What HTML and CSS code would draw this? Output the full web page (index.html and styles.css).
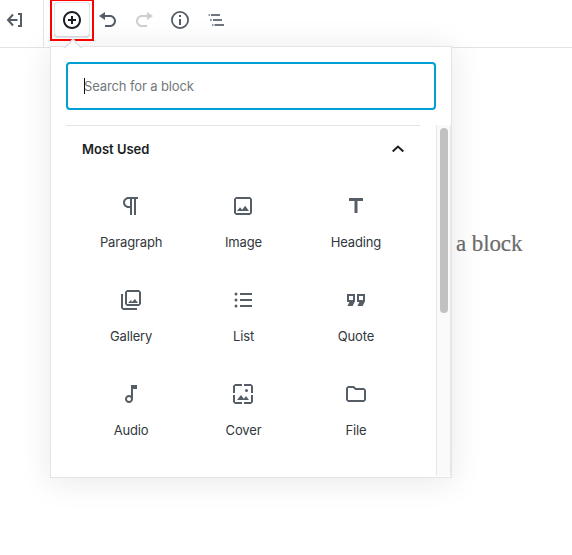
FILE: index.html
```html
<!DOCTYPE html>
<html lang="en">
<head>
<meta charset="utf-8">
<title>Block inserter</title>
<link rel="stylesheet" href="styles.css">
</head>
<body>
<header class="toolbar">
  <div class="toolbar-back">
    <svg class="back-icon" width="20" height="20" viewBox="0 0 20 20"><path d="M8 4.500 3 10l5 5.500M3 10h9.500M13 4h3v12h-3"/></svg>
  </div>
  <nav class="toolbar-tools">
    <button class="tool tool-active" aria-label="Add block"><svg width="20" height="20" viewBox="0 0 20 20"><path d="M10 1c-5 0-9 4-9 9s4 9 9 9 9-4 9-9-4-9-9-9zm0 16c-3.900 0-7-3.100-7-7s3.100-7 7-7 7 3.100 7 7-3.100 7-7 7zm1-11H9v3H6v2h3v3h2v-3h3V9h-3V6z"/></svg></button>
    <button class="tool" aria-label="Undo"><svg width="20" height="20" viewBox="0 0 20 20"><path d="M12 5H7V2L1 6l6 4V7h5c2.200 0 4 1.800 4 4s-1.800 4-4 4H7v2h5c3.300 0 6-2.700 6-6s-2.700-6-6-6z"/></svg></button>
    <button class="tool tool-disabled" aria-label="Redo"><svg width="20" height="20" viewBox="0 0 20 20"><path d="M8 5h5V2l6 4-6 4V7H8c-2.200 0-4 1.800-4 4s1.800 4 4 4h5v2H8c-3.300 0-6-2.700-6-6s2.700-6 6-6z"/></svg></button>
    <button class="tool" aria-label="Content structure"><svg width="20" height="20" viewBox="0 0 20 20"><path d="M10 1a9 9 0 1 0 0 18 9 9 0 0 0 0-18zm0 16.200a7.200 7.200 0 1 1 0-14.400 7.200 7.200 0 0 1 0 14.400zM9 5h2v2H9zM9 9h2v6H9z"/></svg></button>
    <button class="tool tool-outline" aria-label="Block navigation"><svg width="20" height="20" viewBox="0 0 20 20"><path d="M2.500 4.200h1.500v1.600h-1.500zM5 4h9v2H5zM4 9.200h1.800v1.600H4zM7 9h9v2H7zM6 14.200h1.500v1.600H6zM8.500 14H18v2H8.500z"/></svg></button>
  </nav>
</header>
<main class="canvas">
  <p class="canvas-hint">a block</p>
</main>
<section class="popover">
  <div class="search">Search for a block</div>
  <div class="results">
    <div class="panel">
      <h2 class="panel-title"><span>Most Used</span><svg width="20" height="20" viewBox="0 0 20 20"><path d="m4.700 12.500 5.300-5 5.300 5"/></svg></h2>
      <ul class="blocks">
        <li class="block"><svg width="24" height="24" viewBox="0 0 24 24"><path d="M11 5v7H9.500C7.600 12 6 10.400 6 8.500S7.600 5 9.500 5H11m8-2H9.500C6.500 3 4 5.500 4 8.500S6.500 14 9.500 14H11v7h2V5h2v16h2V5h2V3z"/></svg><span>Paragraph</span></li>
        <li class="block"><svg width="24" height="24" viewBox="0 0 24 24"><path d="M19 5v14H5V5h14m0-2H5L3 5v14l2 2h14l2-2V5l-2-2z"/><path d="m14.140 11.860-3 3.870L9 13.140 6 17h12z"/></svg><span>Image</span></li>
        <li class="block"><svg width="24" height="24" viewBox="0 0 24 24"><path d="M5 4v3h5.500v12h3V7H19V4z"/></svg><span>Heading</span></li>
        <li class="block"><svg width="24" height="24" viewBox="0 0 24 24"><path d="M20 4v12H8V4h12m0-2H8L6 4v12l2 2h12l2-2V4l-2-2z"/><path d="m12 12 1 2 3-3 3 4H9zM2 6v14l2 2h14v-2H4V6H2z"/></svg><span>Gallery</span></li>
        <li class="block"><svg width="24" height="24" viewBox="0 0 24 24"><path d="M9 5h12v2H9zM9 11h12v2H9zM9 17h12v2H9z"/><circle cx="5" cy="6" r="1.500"/><circle cx="5" cy="12" r="1.500"/><circle cx="5" cy="18" r="1.500"/></svg><span>List</span></li>
        <li class="block"><svg width="24" height="24" viewBox="0 0 24 24"><path fill-rule="evenodd" d="M13 6h8v7.240L18.620 18h-5.240l2-4H13zM15 8v4h4V8zM3 6h8v7.240L8.620 18H3.380l2-4H3zM5 8v4h4V8z"/></svg><span>Quote</span></li>
        <li class="block"><svg width="24" height="24" viewBox="0 0 24 24"><path d="m12 3 .010 10.550c-.590-.340-1.270-.550-2-.550C7.790 13 6 14.790 6 17s1.790 4 4.010 4S14 19.210 14 17V7h4V3h-6zm-1.990 16c-1.100 0-2-.900-2-2s.900-2 2-2 2 .900 2 2-.900 2-2 2z"/></svg><span>Audio</span></li>
        <li class="block"><svg width="24" height="24" viewBox="0 0 24 24"><path d="M4 4h7V2H4L2 4v7h2V4zm6 9-4 5h12l-3-4-2.030 2.710L10 13zm7-4.500a1.500 1.500 0 1 0-3 0 1.500 1.500 0 0 0 3 0zM20 2h-7v2h7v7h2V4l-2-2zm0 18h-7v2h7l2-2v-7h-2v7zM4 13H2v7l2 2h7v-2H4v-7z"/></svg><span>Cover</span></li>
        <li class="block"><svg width="24" height="24" viewBox="0 0 24 24"><path d="m9.170 6 2 2H20v10H4V6h5.170M10 4H4L2 6v12l2 2h16l2-2V8l-2-2h-8l-2-2z"/></svg><span>File</span></li>
      </ul>
    </div>
    <div class="scrollbar"><div class="thumb"></div></div>
  </div>
</section>
</body>
</html>
```
FILE: styles.css
```css
* {
  box-sizing: border-box;
}

body {
  position: relative;
  width: 572px;
  height: 555px;
  margin: 0;
  overflow: hidden;
  background: #fff;
  color: #191e23;
  font: 13px/18px Inter, "Liberation Sans", sans-serif;
}

svg {
  display: block;
  flex: none;
  fill: currentColor;
}

.toolbar {
  display: flex;
  height: 48px;
  border-bottom: 1px solid #e2e4e7;
}

.toolbar-back {
  width: 44px;
  padding: 10px 0 0 5px;
  border-right: 1px solid #e2e4e7;
  color: #555d66;
}

.back-icon path {
  fill: none;
  stroke: currentColor;
  stroke-width: 2;
}

.toolbar-tools {
  display: flex;
  padding: 2px 0 0 10px;
}

.tool {
  display: grid;
  place-items: center;
  width: 36px;
  height: 36px;
  padding: 0;
  border: 0;
  background: none;
  color: #555d66;
}

.tool-active {
  position: relative;
  border-radius: 4px;
  background: #fff;
  box-shadow: inset 0 0 0 1px #e2e4e7, inset 0 -1px 0 1px #d9dce0;
  color: #191e23;
}

.tool-active::after {
  content: "";
  position: absolute;
  inset: -3px -4px;
  border: 2px solid #f00;
}

.tool-disabled {
  color: #ccced1;
}

.tool-outline {
  color: #6f767d;
}

.canvas {
  padding: 182px 0 0 456px;
}

.canvas-hint {
  margin: 0;
  color: #6c6c6c;
  font: 23px/28px "Liberation Serif", serif;
  letter-spacing: -0.1px;
  white-space: nowrap;
  -webkit-text-stroke: 0.2px #6c6c6c;
}

.popover {
  position: absolute;
  top: 46px;
  left: 50px;
  display: flex;
  flex-direction: column;
  width: 402px;
  height: 432px;
  border: 1px solid #e2e4e7;
  background: #fff;
  box-shadow: 0 3px 30px rgba(25, 30, 35, 0.1);
}

.popover::before {
  content: "";
  position: absolute;
  top: -6px;
  left: 15px;
  width: 12px;
  height: 12px;
  border: 2px solid #e2e4e7;
  border-width: 2px 0 0 2px;
  background: #fff;
  transform: rotate(45deg);
  clip-path: polygon(0 0, 100% 0, 0 100%);
}

.search {
  position: relative;
  height: 48px;
  margin: 15px;
  padding: 13px 16px;
  border: 2px solid #00a0d2;
  border-radius: 4px;
  color: #72777c;
  letter-spacing: -0.12px;
}

.search::before {
  content: "";
  position: absolute;
  top: 14px;
  left: 16px;
  width: 1px;
  height: 16px;
  background: #111;
}

.results {
  display: flex;
  flex: 1;
}

.panel {
  width: 354px;
  margin: 0 16px 0 15px;
  border-top: 1px solid #e2e4e7;
}

.panel-title {
  display: flex;
  align-items: center;
  justify-content: space-between;
  height: 46px;
  margin: 0;
  padding: 0 12px 0 16px;
  font-size: 13px;
  font-weight: 600;
}

.panel-title path {
  fill: none;
  stroke: currentColor;
  stroke-width: 2;
}

.blocks {
  display: grid;
  grid-template-columns: repeat(3, 112.4px);
  grid-auto-rows: 94px;
  justify-content: center;
  margin: 0;
  padding: 0 0 0 1px;
  list-style: none;
}

.block {
  display: flex;
  flex-direction: column;
  align-items: center;
  gap: 15px;
  padding-top: 22px;
  color: #32373c;
  letter-spacing: -0.15px;
}

.block svg {
  color: #555d66;
}

.scrollbar {
  width: 15px;
  margin-bottom: 1px;
  padding: 3px 3px 0;
  border: 1px solid #e8e8e8;
  border-width: 0 1px;
  background: #fafafa;
}

.thumb {
  width: 8px;
  height: 185px;
  border-radius: 4px;
  background: #c1c1c1;
}
```
